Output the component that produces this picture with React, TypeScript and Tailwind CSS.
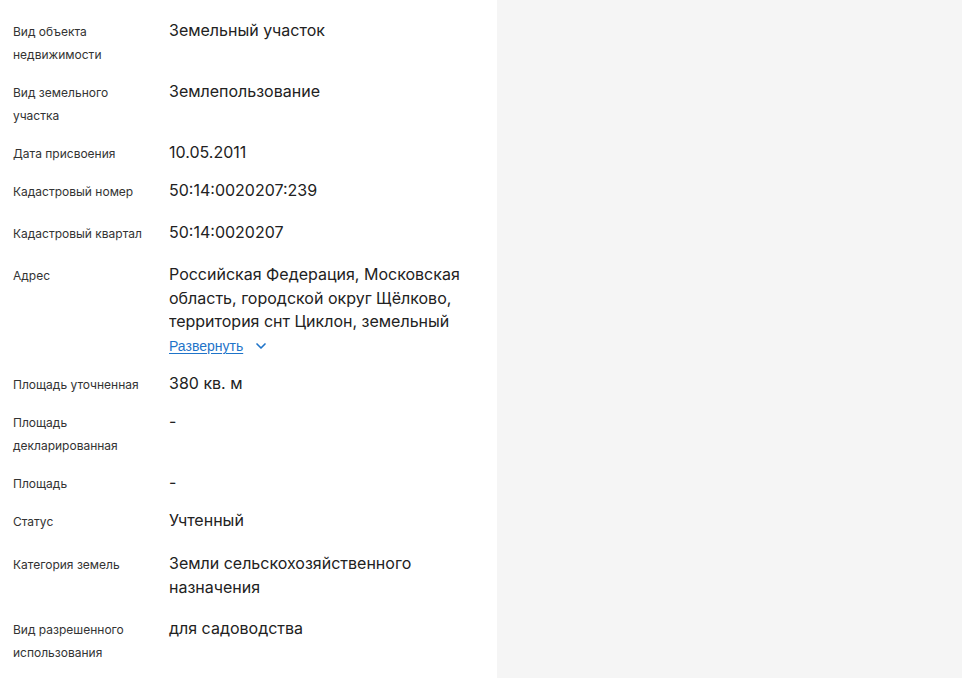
import { ChevronDown } from 'lucide-react';

type Row = { label: string; value: string; address?: boolean; minH?: string };

const rows: Row[] = [
  { label: 'Вид объекта недвижимости', value: 'Земельный участок' },
  { label: 'Вид земельного участка', value: 'Землепользование' },
  { label: 'Дата присвоения', value: '10.05.2011' },
  { label: 'Кадастровый номер', value: '50:14:0020207:239', minH: 'min-h-[28px]' },
  { label: 'Кадастровый квартал', value: '50:14:0020207', minH: 'min-h-[28px]' },
  {
    label: 'Адрес',
    value:
      'Российская Федерация, Московская область, городской округ Щёлково, территория снт Циклон, земельный участок 239',
    address: true,
  },
  { label: 'Площадь уточненная', value: '380 кв. м' },
  { label: 'Площадь декларированная', value: '-' },
  { label: 'Площадь', value: '-' },
  { label: 'Статус', value: 'Учтенный', minH: 'min-h-[29px]' },
  { label: 'Категория земель', value: 'Земли сельскохозяйственного назначения', minH: 'min-h-[51px]' },
  { label: 'Вид разрешенного использования', value: 'для садоводства' },
];

export default function App() {
  return (
    <div className="h-screen flex bg-[#f5f5f5] font-['Inter','Liberation_Sans',sans-serif] overflow-hidden">
      {/* Info panel */}
      <div className="w-[497px] shrink-0 bg-white pl-[13px] pr-7 pt-[19px] flex flex-col gap-3.5">
        {rows.map((row) => (
          <div key={row.label} className={`flex items-start ${row.minH ?? ''}`}>
            <div className="w-[156px] shrink-0 pt-px pr-4 text-xs leading-[23px] text-[#333]">
              {row.label}
            </div>
            <div className="flex-1 text-base leading-[23.5px] text-[#222]">
              {row.address ? (
                <>
                  <div className="h-[71px] overflow-hidden">{row.value}</div>
                  <button className="flex items-center gap-2.5 font-['Liberation_Sans',sans-serif] text-sm leading-6 text-[#1f74c9]">
                    <span className="underline underline-offset-2">Развернуть</span>
                    <ChevronDown size={16} strokeWidth={2.5} />
                  </button>
                </>
              ) : (
                row.value
              )}
            </div>
          </div>
        ))}
      </div>
      {/* Map placeholder */}
      <div className="flex-1" />
    </div>
  );
}
